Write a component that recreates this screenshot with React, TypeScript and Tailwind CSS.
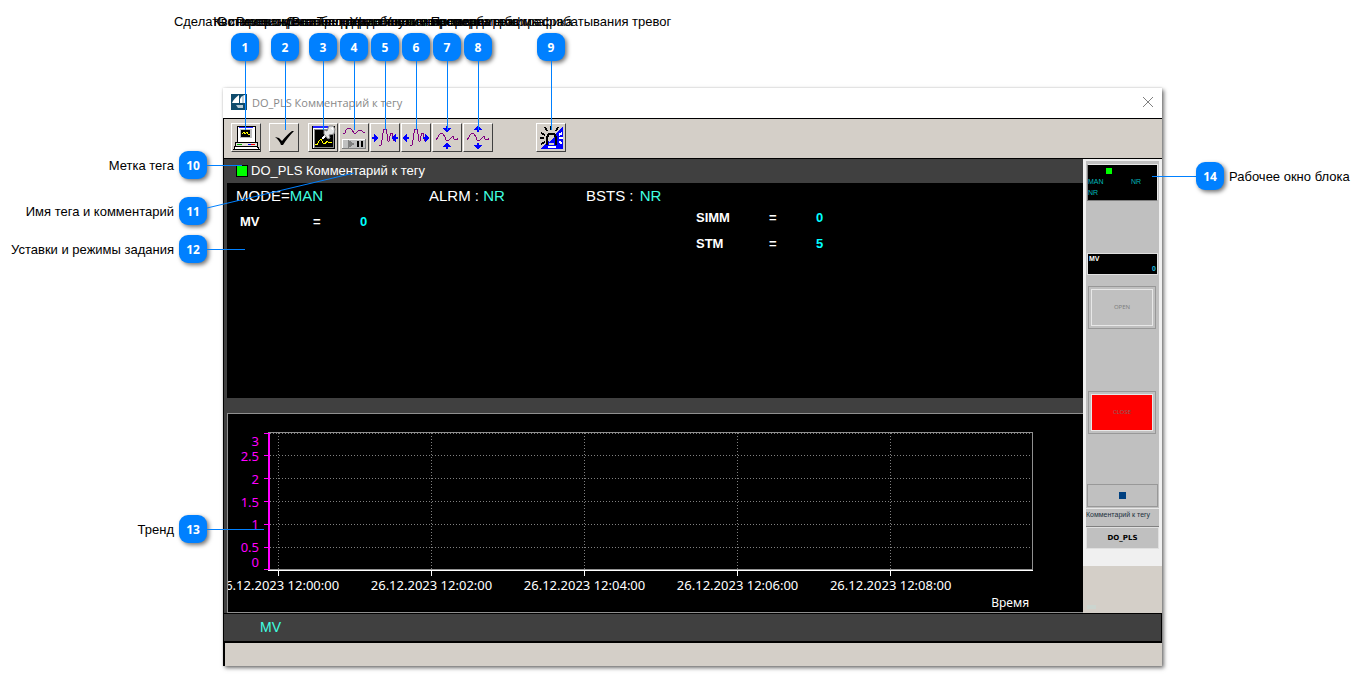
import type { ReactNode } from "react";

const topCallouts = [
  { id: 1, text: "Сделать снимок экрана", pos: "left-[85px]" },
  { id: 2, text: "Квитирование сигналов", pos: "left-[125px]" },
  { id: 3, text: "Резервирование тренда тега", pos: "left-[163px]" },
  { id: 4, text: "Остановить/Возобновить обновление тренда", pos: "left-[194px]" },
  { id: 5, text: "Сжатие графика по оси времени", pos: "left-[225px]" },
  { id: 6, text: "Тренд растянуть по оси времени", pos: "left-[256px]" },
  { id: 7, text: "Уменьшение масштаба графика", pos: "left-[287px]" },
  { id: 8, text: "Увеличение масштаба графика", pos: "left-[318px]" },
  { id: 9, text: "Проверка режима срабатывания тревог", pos: "left-[391px]" },
];

const leftCallouts = [
  { id: 10, text: "Метка тега", pos: "top-[151px]", line: "w-[35px]" },
  { id: 11, text: "Имя тега и комментарий", pos: "top-[197px]", line: "" },
  { id: 12, text: "Уставки и режимы задания", pos: "top-[235px]", line: "w-[38px]" },
  { id: 13, text: "Тренд", pos: "top-[515px]", line: "w-[57px]" },
];

const yTicks = [
  { label: "3", y: 19, textY: 32 },
  { label: "2.5", y: 41, textY: 47 },
  { label: "2", y: 64, textY: 70 },
  { label: "1.5", y: 87, textY: 93 },
  { label: "1", y: 110, textY: 115 },
  { label: "0.5", y: 133, textY: 138 },
  { label: "0", y: 155, textY: 153 },
];

const xTicks = [
  { label: "26.12.2023 12:00:00", x: "5.9%" },
  { label: "26.12.2023 12:02:00", x: "23.8%" },
  { label: "26.12.2023 12:04:00", x: "41.7%" },
  { label: "26.12.2023 12:06:00", x: "59.6%" },
  { label: "26.12.2023 12:08:00", x: "77.5%" },
];

const Badge = ({ id }: { id: number }) => (
  <span className="flex h-7 w-7 shrink-0 items-center justify-center rounded-[9px] bg-[#0080ff] pt-px font-['Open_Sans',sans-serif] text-[12px] font-bold text-white shadow-[2px_2px_4px_rgba(0,0,0,0.55)]">
    {id}
  </span>
);

const ToolButton = ({ label, className = "", children }: { label: string; className?: string; children: ReactNode }) => (
  <button
    aria-label={label}
    className={`flex h-[29px] w-[30px] shrink-0 items-center justify-center border border-t-white border-l-white border-r-[#404040] border-b-[#404040] bg-[#d4cfc8] ${className}`}
  >
    <svg width="28" height="27" viewBox="0 0 28 27" fill="none" shapeRendering="crispEdges">
      {children}
    </svg>
  </button>
);

const ArrowRight = ({ x, y }: { x: number; y: number }) => (
  <path d={`M${x} ${y - 1}h2v-3h1v1h1v1h1v1h1v2h-1v1h-1v1h-1v1h-1v-3h-2z`} fill="#00f" />
);
const ArrowLeft = ({ x, y }: { x: number; y: number }) => (
  <path d={`M${x} ${y - 1}h-2v-3h-1v1h-1v1h-1v1h-1v2h1v1h1v1h1v1h1v-3h2z`} fill="#00f" />
);
const ArrowDown = ({ x, y }: { x: number; y: number }) => (
  <path d={`M${x - 1} ${y}h2v2h3v1h-1v1h-1v1h-1v1h-2v-1h-1v-1h-1v-1h-1v-1h3z`} fill="#00f" />
);
const ArrowUp = ({ x, y }: { x: number; y: number }) => (
  <path d={`M${x - 1} ${y}h2v-2h3v-1h-1v-1h-1v-1h-1v-1h-2v1h-1v1h-1v1h-1v1h3z`} fill="#00f" />
);

const tallWave = "M8 21h2l1-5 1-7 1-4h2l1 5 1 7h1l1-5 1-3h1l1 6 1 2 1-2";
const flatWave = "M3 16l2-3 1-2 2-2 2 1 2 3 1 3 2 1 3-3 2-2 1 3 3 1 1-2";

const Toolbar = () => (
  <div className="flex h-[41px] items-start border-y border-black bg-[#d4cfc8] pt-1 pl-[7px]">
    <ToolButton label="Снимок экрана" className="mr-2">
      <path d="M5 2h18v16H5z" fill="#fff" stroke="#000" />
      <path d="M7 3h14v1H7z" fill="#2020ff" />
      <path d="M8 5h12v9H8z" fill="#c0c0c0" />
      <path d="M9 6h9v7H9z" fill="#000" />
      <path d="M10 10l2-2 1 2 2-2 1 2h2" stroke="#ff0" />
      <path d="M3 18h22v4H3z" fill="#e4e0da" stroke="#000" />
      <path d="M5 20h5" stroke="#0a0" />
      <path d="M16 20h3" stroke="#00f" />
      <path d="M19 20h4" stroke="#f00" />
      <path d="M3 22h22l2 3H2z" fill="#fff" stroke="#000" />
    </ToolButton>
    <ToolButton label="Квитирование" className="mr-[9px]">
      <path d="M5 13l4 1 3 3c3-4 6-7 10-10h2c-4 4-8 9-11 14h-2c-1-3-3-6-6-8z" fill="#000" shapeRendering="auto" />
    </ToolButton>
    <ToolButton label="Резервирование тренда" className="mr-px">
      <path d="M3 2h22v22H3z" fill="#fff" stroke="#000" />
      <path d="M4 3h20" stroke="#22f" strokeWidth="2" />
      <path d="M5 5h19v18H5z" fill="#000" stroke="#888" />
      <path d="M6 20l2 1 2-4 2-2 2 4 2 1 2-3 2 2 2-1 1 1" stroke="#ff0" />
      <path d="M13 15l5-5" stroke="#fff" strokeWidth="2" />
      <path d="M15 6l3 1 2-5h4l2 3-1 5-5 1 1 3-2 1-4-5z" fill="#e4e4e4" stroke="#888" shapeRendering="auto" />
      <path d="M21 5l3-2v3z" fill="#fff" />
    </ToolButton>
    <ToolButton label="Остановить или возобновить тренд" className="mr-px">
      <path d="M3 10l2-1 1-3 2-2h2l2 2 2 3h2l3-3h2l2 2h2" stroke="#800080" />
      <path d="M2 15h23v9H2z" fill="#c0c0c0" stroke="#808080" />
      <path d="M2 24V15h23" stroke="#fff" />
      <path d="M8 16l7 4-7 4z" fill="#808080" />
      <path d="M17 17h2v6h-2zM21 17h2v6h-2z" fill="#000" />
    </ToolButton>
    <ToolButton label="Сжать по времени" className="mr-px">
      <path d={tallWave} stroke="#800080" />
      <ArrowRight x={1} y={14} />
      <ArrowLeft x={27} y={14} />
    </ToolButton>
    <ToolButton label="Растянуть по времени" className="mr-px">
      <path d={tallWave} stroke="#800080" />
      <ArrowLeft x={7} y={14} />
      <ArrowRight x={21} y={14} />
    </ToolButton>
    <ToolButton label="Сжать по вертикали" className="mr-px">
      <path d={flatWave} stroke="#800080" />
      <ArrowDown x={14} y={2} />
      <ArrowUp x={14} y={25} />
    </ToolButton>
    <ToolButton label="Растянуть по вертикали" className="mr-[43px]">
      <path d={flatWave} stroke="#800080" />
      <ArrowUp x={14} y={8} />
      <ArrowDown x={14} y={19} />
    </ToolButton>
    <ToolButton label="Срабатывание тревог">
      <path d="M26 2v23H4z" fill="#00f" />
      <path d="M10 21v-8l2-3h5l2 3v8" stroke="#000" strokeWidth="2" />
      <path d="M12 22V13l5-2v11z" fill="#d4cfc8" />
      <path d="M12 19l5-6v6z" fill="#00f" />
      <path d="M10 21h9v3h-9z" fill="#fff" stroke="#00f" />
      <path d="M8 3l2 4M14 2v4M21 3l-2 4M4 9l4 2M3 14h4M4 20l4-2" stroke="#000" strokeWidth="2" />
      <path d="M22 11l3-2M22 14h4M22 18l3 1" stroke="#fff" strokeWidth="2" />
    </ToolButton>
  </div>
);

const Param = ({ name, value }: { name: string; value: string }) => (
  <div className="flex h-[26px] items-center text-[13px] font-bold">
    <span className="w-[73px] text-white">{name}</span>
    <span className="w-[47px] text-white">=</span>
    <span className="text-[#00ffff]">{value}</span>
  </div>
);

const TagInfo = () => (
  <section className="h-[239px] bg-black text-white">
    <div className="flex h-6 items-center bg-[#404040] pl-[9px] text-[13px]">
      <span className="mr-[3px] h-3 w-3 border border-black bg-[#00ff00]" />
      DO_PLS Комментарий к тегу
    </div>
    <div className="flex h-[26px] items-center pl-[9px] text-[15px]">
      <div className="w-[193px]">
        MODE=<span className="text-[#40ffe0]">MAN</span>
      </div>
      <div className="w-[157px]">
        ALRM : <span className="text-[#40ffe0]">NR</span>
      </div>
      <div>
        BSTS : <span className="ml-0.5 text-[#40ffe0]">NR</span>
      </div>
    </div>
    <div className="flex pl-[13px]">
      <div className="w-[456px]">
        <Param name="MV" value="0" />
      </div>
      <div className="-mt-1">
        <Param name="SIMM" value="0" />
        <Param name="STM" value="5" />
      </div>
    </div>
  </section>
);

const Trend = () => (
  <section className="h-[200px] border border-r-0 border-[#909090] bg-black">
    <svg className="block h-full w-full overflow-hidden font-['Noto_Sans',sans-serif] text-[13px]" shapeRendering="crispEdges">
      <g stroke="#808080" strokeDasharray="1 2">
        {yTicks.slice(0, 6).map((t) => (
          <line key={t.label} x1="42" x2="94.2%" y1={t.y + 0.5} y2={t.y + 0.5} />
        ))}
        {xTicks.map((t) => (
          <line key={t.label} x1={t.x} x2={t.x} y1="19" y2="155" />
        ))}
      </g>
      <g stroke="#909090">
        <line x1="40" x2="94.1%" y1="18.5" y2="18.5" />
        <line x1="94.1%" x2="94.1%" y1="18" y2="156" />
        <line x1="40" x2="94.1%" y1="155.5" y2="155.5" />
      </g>
      <line x1="40" x2="94.2%" y1="156.5" y2="156.5" stroke="#fff" />
      <line x1="41" x2="41" y1="19" y2="156" stroke="#f0f" strokeWidth="2" />
      {yTicks.map((t) => (
        <g key={t.label}>
          <line x1="36" x2="40" y1={t.y + 0.5} y2={t.y + 0.5} stroke="#f0f" />
          <text x="31" y={t.textY} textAnchor="end" fill="#f0f">
            {t.label}
          </text>
        </g>
      ))}
      {xTicks.map((t) => (
        <g key={t.label}>
          <line x1={t.x} x2={t.x} y1="157" y2="162" stroke="#fff" />
          <text x={t.x} y="176" textAnchor="middle" fill="#fff">
            {t.label}
          </text>
        </g>
      ))}
      <text x="93.7%" y="193" textAnchor="end" fill="#fff" className="text-[12px]">
        Время
      </text>
    </svg>
  </section>
);

const Faceplate = () => (
  <aside className="flex w-[79px] shrink-0 flex-col bg-[#d4cfc8]">
    <div className="h-[407px] bg-[#f0f0f0] px-[3px] pt-0.5">
      <div className="h-[347px] bg-[#c0c0c0] px-px pt-[3px]">
        <div className="h-[37px] border border-t-[#e8e8e8] border-r-[#e8e8e8] border-b-[#808080] border-l-[#808080] bg-black text-[7px] leading-[11px] text-[#00b8b8]">
          <div className="flex h-[11px] items-center pl-[18px]">
            <span className="h-[6px] w-[6px] bg-[#00ff00]" />
          </div>
          <div className="flex justify-between pr-4">
            <span>MAN</span>
            <span>NR</span>
          </div>
          <div>NR</div>
        </div>
        <div className="mt-[52px] h-[22px] border border-[#e0e0e0] bg-black px-px text-[7px] leading-[10px] font-bold">
          <div className="text-white">MV</div>
          <div className="text-right text-[#20c0e0]">0</div>
        </div>
        <button className="mx-px mt-[11px] block h-[43px] w-[68px] border border-[#989898] p-0.5">
          <span className="flex h-full items-center justify-center border border-[#e8e8e8] font-['Noto_Sans',sans-serif] text-[6px] text-[#808080]">
            OPEN
          </span>
        </button>
        <button className="mx-px mt-[62px] block h-[43px] w-[68px] border border-[#989898] p-0.5">
          <span className="flex h-full items-center justify-center border border-[#e8e8e8] bg-[#ff0000] font-['Noto_Sans',sans-serif] text-[6px] text-[#806060]">
            CLOSE
          </span>
        </button>
        <button aria-label="Блок" className="mt-[50px] flex h-[23px] w-full items-center justify-center border border-[#989898]">
          <span className="h-[7px] w-[7px] bg-[#004080]" />
        </button>
      </div>
      <div className="h-[19px] overflow-hidden border-t border-b border-t-[#e8e8e8] border-b-[#808080] bg-[#c0c0c0] text-[7px] leading-[12px] whitespace-nowrap text-[#203040]">
        Комментарий к тегу
      </div>
      <div className="flex h-[22px] items-center justify-center border border-[#e0e0e0] bg-[#c0c0c0] font-['DejaVu_Sans',sans-serif] text-[7px] font-bold">
        DO_PLS
      </div>
    </div>
    <div className="mt-[39px] ml-1 h-1 w-[9px] bg-[#ccd5cf]" />
  </aside>
);

const TuningWindow = () => (
  <main className="bg-[#404040] shadow-[2px_2px_4px_rgba(0,0,0,0.55),0_0_2px_rgba(0,0,0,0.15)]">
    <header className="flex h-[30px] items-center bg-white pr-2 pl-2">
      <svg className="mr-[5px] mb-0.5 shrink-0" width="16" height="16" viewBox="0 0 16 16">
        <rect width="16" height="16" fill="#0f4c6d" />
        <path d="M8 1v8H1c1-3 4-6 7-8z" fill="#fff" />
        <path d="M9 5c1-2 3-4 5-4v8H9z" fill="#fff" />
        <path d="M12 1v8" stroke="#0f4c6d" opacity=".5" />
        <path d="M5 11h7v3H7z" fill="#b8ccd6" />
      </svg>
      <h1 className="flex-1 font-['Open_Sans',sans-serif] text-[11px] text-[#888]">DO_PLS Комментарий к тегу</h1>
      <button aria-label="Закрыть" className="mb-0.5">
        <svg width="12" height="12" viewBox="0 0 12 12" stroke="#808080">
          <path d="M1 1l10 10M11 1l-10 10" />
        </svg>
      </button>
    </header>
    <div className="border-l border-black">
      <Toolbar />
      <div className="flex">
        <div className="min-w-0 flex-1 pl-[3px]">
          <TagInfo />
          <div className="h-[15px]" />
          <Trend />
        </div>
        <Faceplate />
      </div>
    </div>
    <div className="flex h-[30px] items-center border border-b-2 border-black pl-9 text-[14px] text-[#40ffe0]">MV</div>
    <footer className="h-[23px] border-l-2 border-black bg-[#d4cfc8]" />
  </main>
);

export default function App() {
  return (
    <div className="relative min-w-[1100px] bg-white pt-[88px] pr-[202px] pb-2 pl-[223px] font-['Liberation_Sans',sans-serif]">
      <TuningWindow />

      {topCallouts.map((c) => (
        <div key={c.id} className={`pointer-events-none absolute top-3 flex w-[320px] flex-col items-center ${c.pos}`}>
          <span className="mb-px h-5 text-[13px] leading-5 whitespace-nowrap">{c.text}</span>
          <Badge id={c.id} />
          <span className="h-[69px] w-px bg-[#0080ff]" />
        </div>
      ))}

      {leftCallouts.map((c) => (
        <div key={c.id} className={`pointer-events-none absolute left-0 flex items-center ${c.pos}`}>
          <div className="flex w-[207px] items-center justify-end gap-[5px] text-[13px] whitespace-nowrap">
            <span className="pt-0.5">{c.text}</span>
            <Badge id={c.id} />
          </div>
          <span className={`h-px bg-[#0080ff] ${c.line}`} />
        </div>
      ))}
      <svg className="pointer-events-none absolute top-[172px] left-[207px]" width="148" height="37" stroke="#0080ff">
        <path d="M0 36L147 1" />
      </svg>

      <div className="pointer-events-none absolute top-[162px] right-0 flex w-[212px] items-center text-[13px] whitespace-nowrap">
        <span className="h-px w-[44px] bg-[#0080ff]" />
        <Badge id={14} />
        <span className="ml-[5px] pt-0.5">Рабочее окно блока</span>
      </div>
    </div>
  );
}
